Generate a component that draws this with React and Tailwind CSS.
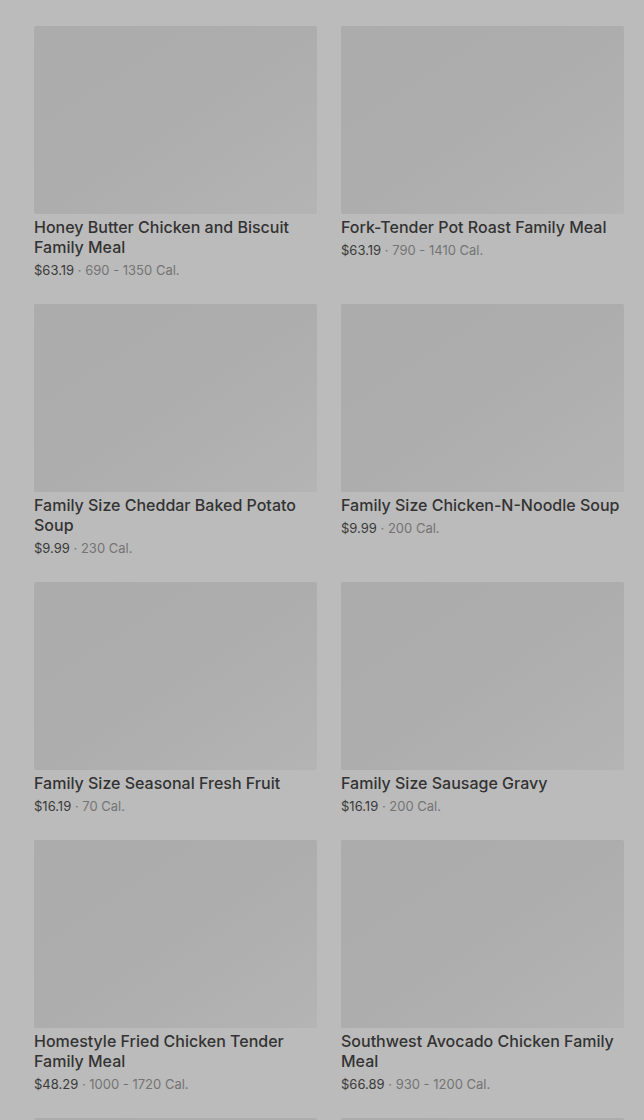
import React from "react";

const items = [
  { name: "Honey Butter Chicken and Biscuit Family Meal", price: "$63.19", cal: "690 - 1350 Cal." },
  { name: "Fork-Tender Pot Roast Family Meal", price: "$63.19", cal: "790 - 1410 Cal." },
  { name: "Family Size Cheddar Baked Potato Soup", price: "$9.99", cal: "230 Cal." },
  { name: "Family Size Chicken-N-Noodle Soup", price: "$9.99", cal: "200 Cal." },
  { name: "Family Size Seasonal Fresh Fruit", price: "$16.19", cal: "70 Cal." },
  { name: "Family Size Sausage Gravy", price: "$16.19", cal: "200 Cal." },
  { name: "Homestyle Fried Chicken Tender Family Meal", price: "$48.29", cal: "1000 - 1720 Cal." },
  { name: "Southwest Avocado Chicken Family Meal", price: "$66.89", cal: "930 - 1200 Cal." },
  { name: null },
  { name: null },
];

const MenuCard = ({ item }) => (
  <div className="flex flex-col">
    <div className="h-[188px] rounded-[2px] bg-gradient-to-br from-[#acacac] via-[#adadad] to-[#b4b4b4]" />
    {item.name && (
      <>
        <div className="mt-[3px] text-[16px] leading-5 font-medium text-[#333333]">
          {item.name}
        </div>
        <div className="mt-[3px] text-[13px] leading-5 text-[#3a3a3a]">
          {item.price}
          <span className="text-[#747474]">{" \u00b7 "}{item.cal}</span>
        </div>
      </>
    )}
  </div>
);

export default function App() {
  return (
    <div
      className="h-[1120px] overflow-hidden bg-[#bbbbbb] pl-[34px] pr-[20px] pt-[26px]"
      style={{ fontFamily: "Inter, 'Noto Sans', sans-serif" }}
    >
      <div className="grid grid-cols-2 gap-x-6 gap-y-6">
        {items.map((item, idx) => (
          <MenuCard key={idx} item={item} />
        ))}
      </div>
    </div>
  );
}
